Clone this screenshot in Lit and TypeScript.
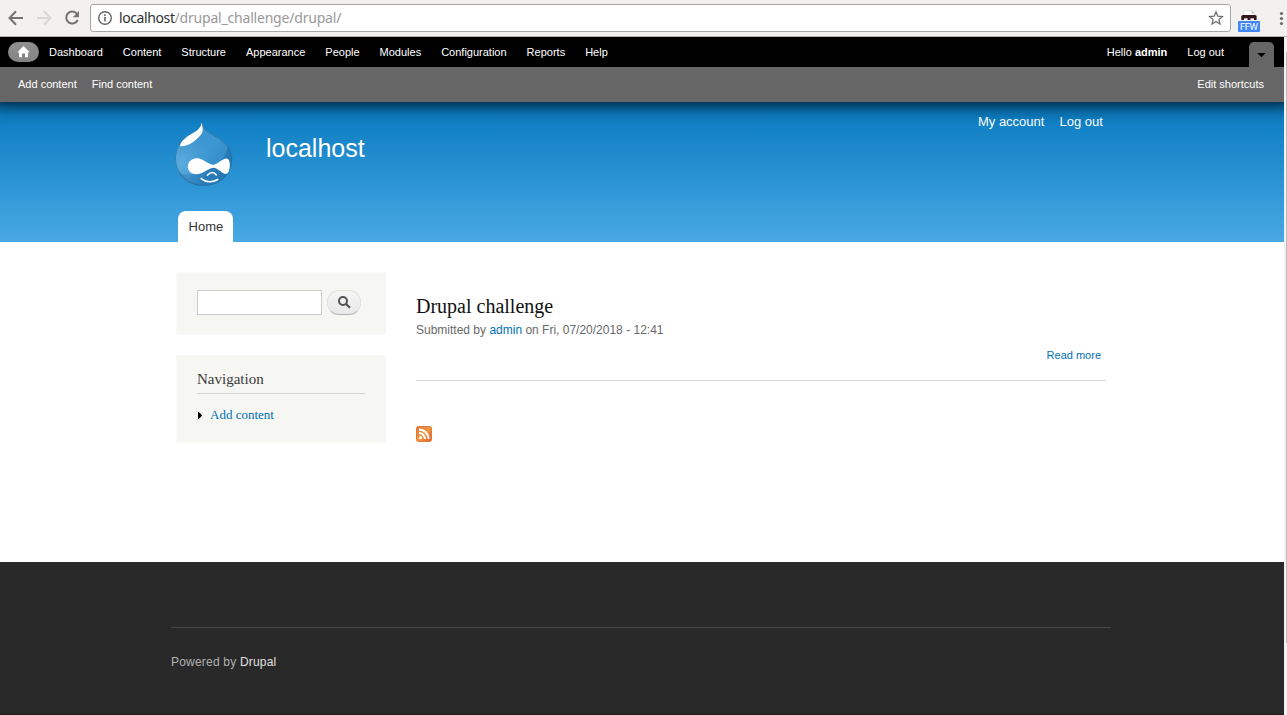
import { LitElement, html, css } from "lit";
import { customElement } from "lit/decorators.js";

@customElement("browser-bar")
class BrowserBar extends LitElement {
  static styles = css`
    :host { display: flex; box-sizing: border-box; height: 37px; background: #f2f1f0; border-bottom: 1px solid #b5b4b3; }
    .nav { display: block; width: 90px; height: 36px; flex: none; }
    .address { box-sizing: border-box; display: flex; align-items: center; width: 1141px; height: 28px; margin-top: 4px; background: #fff; border: 1px solid #a6a6a6; border-radius: 3px; flex: none; }
    .info { width: 16px; height: 16px; margin-left: 6px; }
    .url { font: 14px/26px "Noto Sans", "Open Sans", sans-serif; letter-spacing: -0.2px; margin-left: 6px; color: #999; flex: 1; white-space: nowrap; }
    .host { color: #303030; letter-spacing: -0.4px; }
    .star { width: 16px; height: 16px; margin-right: 6px; }
    .tools { display: block; width: 56px; height: 36px; flex: none; }
  `;
  render() {
    return html`
      <svg class="nav" viewBox="0 0 90 36" fill="none" stroke-width="2">
        <path d="M23 18H10M16 11.3L9.5 18L16 24.7" stroke="#737373" />
        <path d="M37 18H50M44 11.3L50.5 18L44 24.7" stroke="#d8d7d6" />
        <path d="M76.9 13.8A6 6 0 1 0 77.7 20" stroke="#737373" />
        <path d="M79 11V17.2H72.8Z" fill="#737373" />
      </svg>
      <div class="address">
        <svg class="info" viewBox="0 0 16 16" fill="none" stroke="#666">
          <circle cx="8" cy="8" r="6.3" stroke-width="1.4" />
          <path d="M8 7V11.6M8 4.3V5.9" stroke-width="1.6" />
        </svg>
        <div class="url"><span class="host">localhost</span>/drupal_challenge/drupal/</div>
        <svg class="star" viewBox="0 0 16 16">
          <path d="M8 1.8L9.8 6.1L14.4 6.5L10.9 9.5L12 14L8 11.6L4 14L5.1 9.5L1.6 6.5L6.2 6.1Z" fill="none" stroke="#737373" stroke-width="1.3" />
        </svg>
      </div>
      <svg class="tools" viewBox="0 0 56 36">
        <path d="M12.5 16L13 10.5H20.5L23.5 13.5V17H12.5Z" fill="#fff" stroke="#d6d6d6" stroke-width=".7" />
        <path d="M20.5 10.5V13.5H23.5Z" fill="#ccc" />
        <path d="M10.3 18.5V16.5Q10.3 15 12 15H24Q25.6 15 25.6 16.5V20H10.3Z" fill="#33181b" />
        <path d="M13 18.2H16.6V20H13ZM19.4 18.2H23V20H19.4Z" fill="#efe9e9" />
        <rect x="7" y="21" width="22" height="11" rx="1" fill="#4285f4" />
        <text x="18" y="30" fill="#fff" font-family="Roboto, sans-serif" font-size="9.5" text-anchor="middle" textLength="18" lengthAdjust="spacing">FFW</text>
        <g fill="#6a6a6a"><circle cx="50.5" cy="13.5" r="1.6" /><circle cx="50.5" cy="18.5" r="1.6" /><circle cx="50.5" cy="23.5" r="1.6" /></g>
      </svg>
    `;
  }
}

@customElement("admin-toolbar")
class AdminToolbar extends LitElement {
  static styles = css`
    :host { display: block; font: 11px/16px "Liberation Sans", Arial, sans-serif; color: #fff; position: relative; z-index: 1; box-shadow: 0 -9px 18px 10px #000; clip-path: inset(0 0 -22px 0); }
    .menu { display: flex; height: 30px; background: #000; box-sizing: border-box; padding: 5px 10px 0 8px; }
    .home { display: block; width: 31px; height: 20px; border-radius: 10px; background: linear-gradient(#8f8f8f, #858585); }
    .item { padding: 2px 10px 0; white-space: nowrap; }
    .right { margin-left: auto; }
    .toggle { display: block; width: 25px; height: 25px; border-radius: 5px 5px 0 0; background: #666; margin-left: 15px; }
    .shortcuts { display: flex; gap: 15px; height: 35px; box-sizing: border-box; background: #666; padding: 9px 20px 0 18px; }
  `;
  render() {
    const items = ["Dashboard", "Content", "Structure", "Appearance", "People", "Modules", "Configuration", "Reports", "Help"];
    return html`
      <div class="menu">
        <svg class="home" viewBox="0 0 31 20"><path d="M15.5 4L21.7 10.2H20.1V15.2H17V11.5H14V15.2H11V10.2H9.3Z" fill="#fff" /></svg>
        ${items.map((label) => html`<span class="item">${label}</span>`)}
        <span class="item right">Hello <b>admin</b></span>
        <span class="item">Log out</span>
        <svg class="toggle" viewBox="0 0 25 25"><path d="M8.4 11H16.6L12.5 15.2Z" fill="#000" /></svg>
      </div>
      <div class="shortcuts"><span>Add content</span><span>Find content</span><span class="right">Edit shortcuts</span></div>
    `;
  }
}

@customElement("drupal-logo")
class DrupalLogo extends LitElement {
  static styles = css`
    :host { display: block; width: 60px; height: 67px; }
    .drop { display: block; width: 60px; height: 67px; }
  `;
  render() {
    return html`
      <svg class="drop" viewBox="0 0 60 67">
        <defs>
          <linearGradient id="body" x1="0" y1="0" x2="1" y2=".8">
            <stop offset="0" stop-color="#3a8fc8" /><stop offset=".55" stop-color="#3d97d2" /><stop offset="1" stop-color="#2f86c0" />
          </linearGradient>
          <radialGradient id="glow" cx=".12" cy=".62" r=".5">
            <stop offset="0" stop-color="#74bce9" stop-opacity=".6" /><stop offset="1" stop-color="#59aada" stop-opacity="0" />
          </radialGradient>
          <clipPath id="outline"><path d="M27.8 .5C29 7 33 10 39 13.4C50 19.5 58.2 26 58.2 37.5C58.2 53.5 46 65 29.5 65C13 65 1 52.5 1 37.5C1 27 7 18.5 15.5 13.2C22 9.5 27.2 7.7 27.8 .5Z" /></clipPath>
        </defs>
        <g clip-path="url(#outline)">
          <rect width="60" height="67" fill="url(#body)" />
          <path d="M60 18L54 24C53 36 45 44 35 48C23 53 12 56 5 51V67H60Z" fill="#1f6eab" opacity=".6" />
          <rect width="60" height="67" fill="url(#glow)" />
          <path d="M27.8 .5C29 7 33 10 39 13.4C50 19.5 58.2 26 58.2 37.5C58.2 53.5 46 65 29.5 65C13 65 1 52.5 1 37.5C1 27 7 18.5 15.5 13.2C22 9.5 27.2 7.7 27.8 .5Z" fill="none" stroke="#286f9f" stroke-width="1.8" opacity=".75" />
        </g>
        <path d="M27.6 1.5C27 7.5 22.5 10.3 16.5 13.5C10.5 17 6.6 21 6 25.2C12.5 25.5 18 22.5 22.5 18.3C25.7 15.3 29.4 12.5 28.6 7Z" fill="#fff" />
        <path d="M27.8 38.5C31.5 40.2 36 43.7 39.2 43.7C43.6 43.7 48 37.5 52.5 37.5C56.8 37.5 56.9 49 53.5 52.2C50.3 55 46.5 49 40.5 46.8C34.5 46.5 29.5 53.2 22.2 53.2C17 53.2 13.7 49.8 13.8 45.5C14 40.8 17.7 37.5 22.5 37.3C24.3 37.2 26 37.8 27.8 38.5Z" fill="#fff" />
        <path d="M33.4 54.2C37 50.7 40 50.8 42.3 53.9M27.2 57.6C32 61.7 39 61.7 43.7 58.5" fill="none" stroke="#fff" stroke-width="1.6" stroke-linecap="round" />
      </svg>
    `;
  }
}

@customElement("app-root")
class AppRoot extends LitElement {
  static styles = css`
    :host { display: block; width: 1287px; height: 715px; overflow: hidden; background: #fff; font-family: "Liberation Sans", Arial, sans-serif; }
    .viewport { display: flex; height: 678px; }
    .page { width: 1284px; flex: none; display: flex; flex-direction: column; }
    .scroll { flex: 1; background: #f1f1f1; padding: 15px 0 0 2px; }
    .thumb { height: 591px; background: #bcbcbc; }
    .header { box-sizing: border-box; height: 140px; padding: 0 181px 0 174px; background: linear-gradient(#0779bf, #48a9e4); display: grid; grid-template-columns: 60px 1fr auto; grid-template-rows: 109px 31px; color: #fff; }
    .logo { margin-top: 19px; }
    .site { font-size: 25px; line-height: 30px; padding: 31px 0 0 32px; }
    .account { display: flex; gap: 15px; font-size: 13px; line-height: 16px; padding-top: 12px; margin-right: 0.2px; }
    .tab { box-sizing: border-box; width: 55px; margin-left: 4px; height: 31px; border-radius: 8px 8px 0 0; background: #fff; color: #333; font-size: 13px; line-height: 32px; padding-left: 10.6px; }
    .main { height: 320px; box-sizing: border-box; padding: 30px 178px 0 176px; display: grid; grid-template-columns: 210px 690px; gap: 30px; }
    .block { box-sizing: border-box; background: #f6f6f2; border: 1px solid #f9f9f9; }
    .search { height: 63px; padding: 17px 20px 0; display: flex; gap: 5px; }
    .field { box-sizing: border-box; width: 125px; height: 25px; border: 1px solid #ccc; background: #fff; }
    .button { box-sizing: border-box; width: 34px; height: 25px; border: 1px solid #e0e0e0; border-bottom-color: #b4b4b4; border-radius: 12px; background: linear-gradient(#f5f5f5, #e8e8e8); }
    .glass { display: block; width: 32px; height: 23px; }
    .navigation { height: 88px; margin-top: 20px; padding: 14px 20px 0; font-family: "Liberation Serif", "Times New Roman", serif; }
    .heading { font-size: 15px; line-height: 18px; height: 23px; color: #3b3b3b; border-bottom: 1px solid #d6d6d6; }
    .link { display: flex; align-items: center; font-size: 13px; line-height: 16px; color: #0071b3; margin-top: 13px; }
    .arrow { width: 5px; height: 7px; margin: 0 7px 0 1px; }
    .title { font: 20px/24px "Liberation Serif", "Times New Roman", serif; color: #111; padding-top: 22px; }
    .submitted { font-size: 12px; line-height: 16px; color: #68696b; margin-top: 4px; }
    .blue { color: #0071b3; }
    .more { text-align: right; font-size: 11px; line-height: 14px; color: #0071b3; margin-top: 10px; padding: 0 5px 18px 0; border-bottom: 1px solid #d3d7d9; }
    .feed { display: block; width: 16px; height: 16px; margin-top: 45px; }
    .footer { flex: 1; background: #292929; padding: 65px 173px 0 171px; border-bottom: 1px solid #1d1d1d; font-size: 12px; line-height: 16px; letter-spacing: 0.2px; color: #b1b1b1; }
    .powered { border-top: 1px solid #484848; padding-top: 26px; }
    .drupal { color: #e0e0e0; }
  `;
  render() {
    return html`
      <browser-bar></browser-bar>
      <div class="viewport">
        <div class="page">
          <admin-toolbar></admin-toolbar>
          <div class="header">
            <drupal-logo class="logo"></drupal-logo>
            <div class="site">localhost</div>
            <div class="account"><span>My account</span><span>Log out</span></div>
            <div class="tab">Home</div>
          </div>
          <div class="main">
            <div>
              <div class="block search">
                <div class="field"></div>
                <div class="button"><svg class="glass" viewBox="0 0 32 23" fill="none" stroke="#505050"><circle cx="15" cy="10" r="4" stroke-width="2" /><path d="M18 13L22 16.8" stroke-width="2.2" /></svg></div>
              </div>
              <div class="block navigation">
                <div class="heading">Navigation</div>
                <div class="link"><svg class="arrow" viewBox="0 0 5 7"><path d="M0 0H.8L4.2 3.5L.8 7H0Z" fill="#000" /></svg>Add content</div>
              </div>
            </div>
            <div>
              <div class="title">Drupal challenge</div>
              <div class="submitted">Submitted by <span class="blue">admin</span> on Fri, 07/20/2018 - 12:41</div>
              <div class="more">Read more</div>
              <svg class="feed" viewBox="0 0 16 16">
                <defs><linearGradient id="orange" x1="0" y1="0" x2="1" y2="1"><stop offset="0" stop-color="#e0703a" /><stop offset=".5" stop-color="#f49a3c" /><stop offset="1" stop-color="#dc6030" /></linearGradient></defs>
                <rect x=".5" y=".5" width="15" height="15" rx="2" fill="url(#orange)" stroke="#e07a40" />
                <circle cx="4.5" cy="11.6" r="1.6" fill="#fff" />
                <path d="M3 7A6 6 0 0 1 9 13M3 3.4A9.6 9.6 0 0 1 12.6 13" fill="none" stroke="#fff" stroke-width="2" />
              </svg>
            </div>
          </div>
          <div class="footer"><div class="powered">Powered by <span class="drupal">Drupal</span></div></div>
        </div>
        <div class="scroll"><div class="thumb"></div></div>
      </div>
    `;
  }
}
